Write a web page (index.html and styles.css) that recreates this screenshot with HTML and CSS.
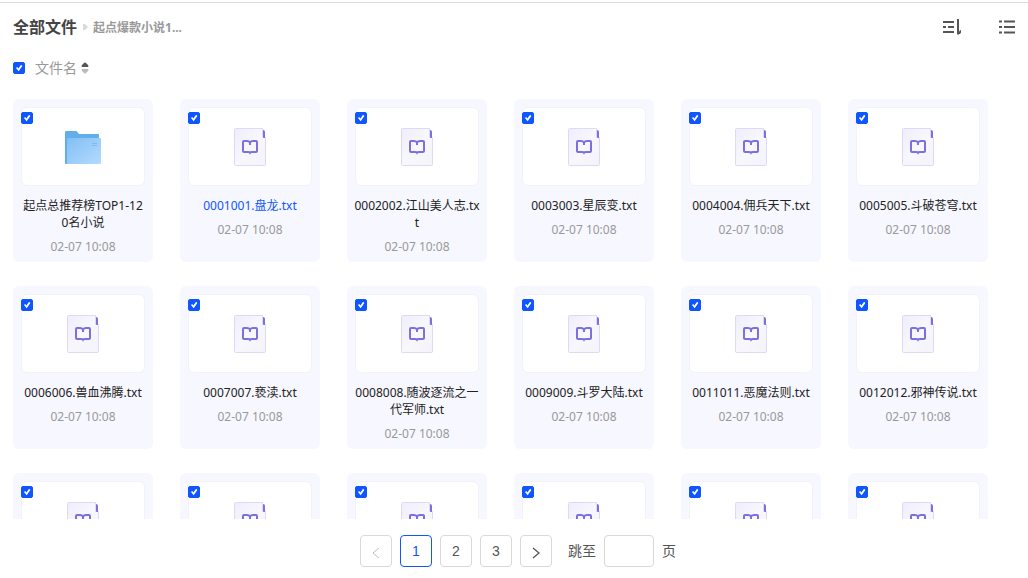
FILE: index.html
```
<!DOCTYPE html>
<html lang="zh-CN">
<head>
<meta charset="utf-8">
<meta name="viewport" content="width=device-width, initial-scale=1">
<title>全部文件</title>
<link rel="stylesheet" href="styles.css">
</head>
<body>
<svg class="sprite" aria-hidden="true">
  <defs>
    <linearGradient id="folder-fill" x1="0" y1="0" x2="1" y2="1">
      <stop offset="0" stop-color="#82bff3"/><stop offset="1" stop-color="#b3dbff"/>
    </linearGradient>
    <linearGradient id="page-fill" x1="0" y1="0" x2="1" y2="1">
      <stop offset="0" stop-color="#efedfc"/><stop offset=".5" stop-color="#f8f7fd"/><stop offset="1" stop-color="#f4f3fb"/>
    </linearGradient>
  </defs>
  <symbol id="folder" viewBox="0 0 36 35">
    <path d="M0 3q0-1 1-1h10.500l2.500 3h19q1 0 1 1v29H1q-1 0-1-1z" fill="#62aeea"/>
    <path d="M2 10q0-1 1-1h32q1 0 1 1v24q0 1-1 1H2z" fill="url(#folder-fill)"/>
    <path d="M27 14.500h5M27 16.500h5" stroke="#7dbcf0"/>
  </symbol>
  <symbol id="book" viewBox="0 0 32 38">
    <path d="M1.500.5H28.500V9.500H31.500V36.500q0 1-1 1h-29q-1 0-1-1v-35q0-1 1-1z" fill="url(#page-fill)" stroke="#dedaf6"/>
    <path d="M29 2q2 0 2 2v6h-1q-1 0-1-1z" fill="#7a70e0"/>
    <path d="M16 14.500Q15 13 13 13H10q-1 0-1 1v9q0 1 1 1h4q1.500 0 2 .8q.5-.8 2-.8h4q1 0 1-1v-9q0-1-1-1h-3q-2 0-3 1.500zv2.500" fill="none" stroke="#7a70e0" stroke-width="2"/>
  </symbol>
</svg>
<div class="page">
  <header class="topbar">
    <nav class="crumbs" aria-label="路径">
      <a class="crumb-root" href="#">全部文件</a>
      <svg class="crumb-arrow" viewBox="0 0 5 6"><path d="M0 0h2l3 3-3 3H0z" fill="#d9d9d9"/></svg>
      <span class="crumb-current">起点爆款小说1...</span>
    </nav>
    <div class="tools">
      <button class="tool" type="button" aria-label="排序"><svg viewBox="0 0 20 18"><path d="M2 4h11M2 9h3M7 9h6M2 14h11M17 1v15.500M17 15h1.500L20 12.500" fill="none" stroke="#555" stroke-width="2"/></svg></button>
      <button class="tool" type="button" aria-label="列表"><svg viewBox="0 0 20 18"><path d="M2 3.500h3M7 3.500h11M2 9h3M7 9h11M2 14.500h3M7 14.500h11" fill="none" stroke="#555" stroke-width="2"/></svg></button>
    </div>
  </header>
  <div class="sortbar">
    <input class="check" type="checkbox" id="all" aria-label="全选" checked>
    <button class="sort" type="button">文件名<svg viewBox="0 0 8 12"><path d="M1 5q-1-1 0-2l2-2q1-1 2 0l2 2q1 1 0 2z" fill="#555"/><path d="M1 7q-1 1 0 2l2 2q1 1 2 0l2-2q1-1 0-2z" fill="#bbb"/></svg></button>
  </div>
  <main class="list">
    <ul class="grid">
      <li class="card"><input class="check" type="checkbox" id="f1" checked><div class="thumb"><svg class="folder"><use href="#folder"/></svg></div><label class="name" for="f1">起点总推荐榜TOP1-120名小说</label><time class="date">02-07 10:08</time></li>
      <li class="card"><input class="check" type="checkbox" id="f2" checked><div class="thumb"><svg class="book"><use href="#book"/></svg></div><label class="name active" for="f2">0001001.盘龙.txt</label><time class="date">02-07 10:08</time></li>
      <li class="card"><input class="check" type="checkbox" id="f3" checked><div class="thumb"><svg class="book"><use href="#book"/></svg></div><label class="name" for="f3">0002002.江山美人志.txt</label><time class="date">02-07 10:08</time></li>
      <li class="card"><input class="check" type="checkbox" id="f4" checked><div class="thumb"><svg class="book"><use href="#book"/></svg></div><label class="name" for="f4">0003003.星辰变.txt</label><time class="date">02-07 10:08</time></li>
      <li class="card"><input class="check" type="checkbox" id="f5" checked><div class="thumb"><svg class="book"><use href="#book"/></svg></div><label class="name" for="f5">0004004.佣兵天下.txt</label><time class="date">02-07 10:08</time></li>
      <li class="card"><input class="check" type="checkbox" id="f6" checked><div class="thumb"><svg class="book"><use href="#book"/></svg></div><label class="name" for="f6">0005005.斗破苍穹.txt</label><time class="date">02-07 10:08</time></li>
      <li class="card"><input class="check" type="checkbox" id="f7" checked><div class="thumb"><svg class="book"><use href="#book"/></svg></div><label class="name" for="f7">0006006.兽血沸腾.txt</label><time class="date">02-07 10:08</time></li>
      <li class="card"><input class="check" type="checkbox" id="f8" checked><div class="thumb"><svg class="book"><use href="#book"/></svg></div><label class="name" for="f8">0007007.亵渎.txt</label><time class="date">02-07 10:08</time></li>
      <li class="card"><input class="check" type="checkbox" id="f9" checked><div class="thumb"><svg class="book"><use href="#book"/></svg></div><label class="name" for="f9">0008008.随波逐流之一代军师.txt</label><time class="date">02-07 10:08</time></li>
      <li class="card"><input class="check" type="checkbox" id="f10" checked><div class="thumb"><svg class="book"><use href="#book"/></svg></div><label class="name" for="f10">0009009.斗罗大陆.txt</label><time class="date">02-07 10:08</time></li>
      <li class="card"><input class="check" type="checkbox" id="f11" checked><div class="thumb"><svg class="book"><use href="#book"/></svg></div><label class="name" for="f11">0011011.恶魔法则.txt</label><time class="date">02-07 10:08</time></li>
      <li class="card"><input class="check" type="checkbox" id="f12" checked><div class="thumb"><svg class="book"><use href="#book"/></svg></div><label class="name" for="f12">0012012.邪神传说.txt</label><time class="date">02-07 10:08</time></li>
      <li class="card"><input class="check" type="checkbox" aria-label="选择文件" checked><div class="thumb"><svg class="book"><use href="#book"/></svg></div></li>
      <li class="card"><input class="check" type="checkbox" aria-label="选择文件" checked><div class="thumb"><svg class="book"><use href="#book"/></svg></div></li>
      <li class="card"><input class="check" type="checkbox" aria-label="选择文件" checked><div class="thumb"><svg class="book"><use href="#book"/></svg></div></li>
      <li class="card"><input class="check" type="checkbox" aria-label="选择文件" checked><div class="thumb"><svg class="book"><use href="#book"/></svg></div></li>
      <li class="card"><input class="check" type="checkbox" aria-label="选择文件" checked><div class="thumb"><svg class="book"><use href="#book"/></svg></div></li>
      <li class="card"><input class="check" type="checkbox" aria-label="选择文件" checked><div class="thumb"><svg class="book"><use href="#book"/></svg></div></li>
    </ul>
  </main>
  <footer class="pager">
    <button class="page-btn" type="button" aria-label="上一页" disabled><svg viewBox="0 0 8 12"><path d="M7 1L1 6l6 5" fill="none" stroke="#bfbfbf"/></svg></button>
    <button class="page-btn current" type="button" aria-current="page">1</button>
    <button class="page-btn" type="button">2</button>
    <button class="page-btn" type="button">3</button>
    <button class="page-btn" type="button" aria-label="下一页"><svg viewBox="0 0 8 12"><path d="M1 1l6 5-6 5" fill="none" stroke="#555" stroke-width="1.300"/></svg></button>
    <label class="jump" for="jump">跳至</label>
    <input class="jump-input" id="jump" type="text">
    <span>页</span>
  </footer>
</div>
</body>
</html>
```

FILE: styles.css
```
* { box-sizing: border-box; }
body {
  margin: 0;
  background: #fff;
  color: #555;
  font: 14px/20px "Noto Sans", "Noto Sans CJK SC", sans-serif;
}
button { padding: 0; border: 0; background: none; color: inherit; font: inherit; cursor: pointer; }
svg { display: block; }
.sprite { position: absolute; width: 0; height: 0; }

.page {
  display: flex;
  flex-direction: column;
  height: 100vh;
  padding-top: 2px;
}
.topbar {
  display: flex;
  align-items: center;
  justify-content: space-between;
  flex: none;
  height: 49px;
  padding: 0 11px 0 13px;
  border-top: 1px solid #ddd;
}
.crumbs { display: flex; align-items: center; font-weight: 700; }
.crumb-root { color: #444; font-size: 16px; line-height: 24px; text-decoration: none; }
.crumb-arrow { width: 5px; height: 6px; margin: 0 5px 0 6px; }
.crumb-current { padding-top: 2px; color: #999; font-size: 12px; }
.tools { display: flex; gap: 36px; }
.tool svg { width: 20px; height: 18px; }

.sortbar {
  display: flex;
  align-items: center;
  flex: none;
  gap: 10px;
  height: 34px;
  padding-left: 13px;
}
.sort { display: flex; align-items: center; gap: 4px; color: #999; }
.sort svg { width: 8px; height: 12px; }

.check {
  display: grid;
  place-items: center;
  appearance: none;
  width: 12px;
  height: 12px;
  margin: 0;
  border: 1px solid #0f56ff;
  border-radius: 2px;
  background: #fff;
}
.check:checked { background: #0f56ff; }
.check:checked::before {
  content: "";
  width: 8px;
  height: 8px;
  background: #fff;
  clip-path: polygon(12% 50%, 28% 38%, 42% 56%, 76% 10%, 92% 24%, 46% 90%);
}

.list {
  flex: 1;
  min-height: 0;
  margin-top: 14px;
  padding-left: 13px;
  overflow-y: auto;
  scrollbar-width: none;
}
.grid {
  display: grid;
  grid-template-columns: repeat(auto-fill, 140px);
  gap: 24px 27px;
  margin: 0;
  padding: 0;
  list-style: none;
}
.card {
  position: relative;
  display: flex;
  flex-direction: column;
  align-items: center;
  min-height: 163px;
  padding: 8px 7px 7px;
  border-radius: 6px;
  background: #f7f7ff;
  font-size: 12px;
  line-height: 17px;
}
.card .check { position: absolute; top: 13px; left: 8px; }
.thumb {
  display: grid;
  place-items: center;
  width: 124px;
  height: 79px;
  border: 1px solid #f2f2f7;
  border-radius: 6px;
  background: #fff;
}
.folder { width: 36px; height: 35px; }
.book { width: 32px; height: 38px; }
.name {
  width: 100%;
  margin: 11px 0 7px;
  color: #222;
  text-align: center;
  word-break: break-all;
}
.name.active { color: #0f56ff; }
.date { color: #999; }

.pager {
  display: flex;
  align-items: center;
  justify-content: center;
  flex: none;
  gap: 8px;
  padding: 16px 0 11px 8px;
}
.page-btn {
  display: grid;
  place-items: center;
  width: 32px;
  height: 32px;
  border: 1px solid #d9d9d9;
  border-radius: 4px;
  font-family: "Liberation Sans", sans-serif;
}
.page-btn svg { width: 8px; height: 12px; margin-top: 4px; }
.page-btn.current { border-color: #0f56ff; color: #0f56ff; }
.jump { margin-left: 8px; }
.jump-input {
  width: 50px;
  height: 32px;
  padding: 0 8px;
  border: 1px solid #d9d9d9;
  border-radius: 4px;
  font: inherit;
}
```
